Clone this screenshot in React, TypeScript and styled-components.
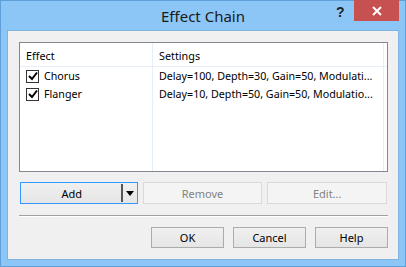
import React from "react";
import styled, { createGlobalStyle } from "styled-components";

const Global = createGlobalStyle`
  html, body { margin: 0; padding: 0; }
  body { width: 406px; height: 267px; overflow: hidden; }
`;

const Frame = styled.div`
  box-sizing: border-box;
  width: 406px;
  height: 267px;
  background: #8cc6f6;
  border: 1px solid #5f9fd8;
  display: flex;
  flex-direction: column;
  font-family: "Noto Sans", "Liberation Sans", sans-serif;
`;

const TitleBar = styled.div`
  height: 29px;
  position: relative;
  display: flex;
  justify-content: center;
  align-items: center;
`;

const Title = styled.div`
  font-family: "Noto Sans", "Open Sans", sans-serif;
  font-size: 15px;
  color: #1a1a1a;
  margin-top: 1px;
`;

const HelpMark = styled.div`
  position: absolute;
  left: 335px;
  top: 3px;
  font-family: "Liberation Sans", sans-serif;
  font-weight: bold;
  font-size: 14px;
  color: #222;
`;

const CloseBtn = styled.div`
  position: absolute;
  left: 353px;
  top: -1px;
  width: 45px;
  height: 21px;
  background: #c75050;
  display: flex;
  align-items: center;
  justify-content: center;
`;

const Client = styled.div`
  margin: 0 6px 6px 6px;
  flex: 1;
  background: #f0f0f0;
  border: 1px solid #7fb3e2;
  padding: 11px 11px 0 11px;
  display: flex;
  flex-direction: column;
`;

const ListBox = styled.div`
  box-sizing: border-box;
  height: 130px;
  width: 369px;
  background: #fff;
  border: 1px solid #828790;
  position: relative;
  overflow: hidden;
`;

const HeaderRow = styled.div`
  display: flex;
  height: 23px;
  border-bottom: 1px solid #e5eef9;
`;

const Col = styled.div<{ w: number }>`
  box-sizing: border-box;
  width: ${(p) => p.w}px;
  flex: none;
  padding-left: 6px;
  padding-top: 2px;
  display: flex;
  align-items: center;
  font-size: 10.8px;
  color: #000;
  white-space: nowrap;
`;

const ColLine = styled.div<{ left: number }>`
  position: absolute;
  top: 0;
  bottom: 0;
  left: ${(p) => p.left}px;
  width: 1px;
  background: #e5eef9;
`;

const Row = styled.div`
  display: flex;
  height: 18px;
`;

const Cell = styled.div<{ w: number }>`
  box-sizing: border-box;
  width: ${(p) => p.w}px;
  flex: none;
  display: flex;
  align-items: center;
  padding-left: 6px;
  font-size: 10.7px;
  color: #000;
  white-space: nowrap;
  overflow: hidden;
`;

const Check = styled.div`
  box-sizing: border-box;
  width: 13px;
  height: 13px;
  border: 1px solid #333;
  background: #fff;
  margin-right: 5px;
  display: flex;
  align-items: center;
  justify-content: center;
`;

const ButtonRow = styled.div`
  display: flex;
  gap: 5px;
  margin-top: 10px;
  padding-left: 1px;
`;

const Btn = styled.div<{ w: number; disabled?: boolean; focus?: boolean }>`
  box-sizing: border-box;
  width: ${(p) => p.w}px;
  height: 22px;
  border: 1px solid
    ${(p) => (p.focus ? "#3399ff" : p.disabled ? "#d9d9d9" : "#acacac")};
  background: ${(p) =>
    p.disabled ? "#f4f4f4" : "linear-gradient(#f0f0f0, #e5e5e5)"};
  color: ${(p) => (p.disabled ? "#838383" : "#000")};
  font-size: 11px;
  display: flex;
  align-items: center;
  justify-content: center;
  position: relative;
`;

const SplitPart = styled.div`
  position: absolute;
  right: 0;
  top: 0;
  bottom: 0;
  width: 14px;
  display: flex;
  align-items: center;
  justify-content: center;
  border-left: 2px solid #555;
  margin-top: 1px;
  margin-bottom: 1px;
`;

const Divider = styled.div`
  height: 1px;
  background: #a0a0a0;
  width: 369px;
  margin-top: 11px;
  border-bottom: 1px solid #fff;
`;

const FooterRow = styled.div`
  display: flex;
  justify-content: flex-end;
  gap: 9px;
  margin-top: 10px;
  padding-right: 1px;
  width: 369px;
`;

const FootBtn = styled(Btn)`
  height: 21px;
  border-color: #acacac;
`;

const CheckMark = () => (
  <svg width="10" height="10" viewBox="0 0 10 10">
    <path d="M1 5 L4 8 L9 1.5" fill="none" stroke="#000" strokeWidth="2" />
  </svg>
);

const effects = [
  { name: "Chorus", settings: "Delay=100, Depth=30, Gain=50, Modulati..." },
  { name: "Flanger", settings: "Delay=10, Depth=50, Gain=50, Modulatio..." },
];

export default function App() {
  return (
    <>
      <Global />
      <Frame>
        <TitleBar>
          <Title>Effect Chain</Title>
          <HelpMark>?</HelpMark>
          <CloseBtn>
            <svg width="10" height="10" viewBox="0 0 10 10">
              <path d="M1 1 L9 9 M9 1 L1 9" stroke="#fff" strokeWidth="2" />
            </svg>
          </CloseBtn>
        </TitleBar>
        <Client>
          <ListBox>
            <ColLine left={132} />
            <ColLine left={363} />
            <HeaderRow>
              <Col w={133}>Effect</Col>
              <Col w={231}>Settings</Col>
            </HeaderRow>
            {effects.map((e) => (
              <Row key={e.name}>
                <Cell w={133}>
                  <Check>
                    <CheckMark />
                  </Check>
                  {e.name}
                </Cell>
                <Cell w={231}>{e.settings}</Cell>
              </Row>
            ))}
          </ListBox>
          <ButtonRow>
            <Btn w={118} focus>
              <span style={{ marginRight: 14 }}>Add</span>
              <SplitPart>
                <svg width="8" height="5" viewBox="0 0 8 5">
                  <path d="M0 0 H8 L4 5 Z" fill="#000" />
                </svg>
              </SplitPart>
            </Btn>
            <Btn w={120} disabled>
              Remove
            </Btn>
            <Btn w={120} disabled>
              Edit...
            </Btn>
          </ButtonRow>
          <Divider />
          <FooterRow>
            <FootBtn w={73}>OK</FootBtn>
            <FootBtn w={73}>Cancel</FootBtn>
            <FootBtn w={73}>Help</FootBtn>
          </FooterRow>
        </Client>
      </Frame>
    </>
  );
}
